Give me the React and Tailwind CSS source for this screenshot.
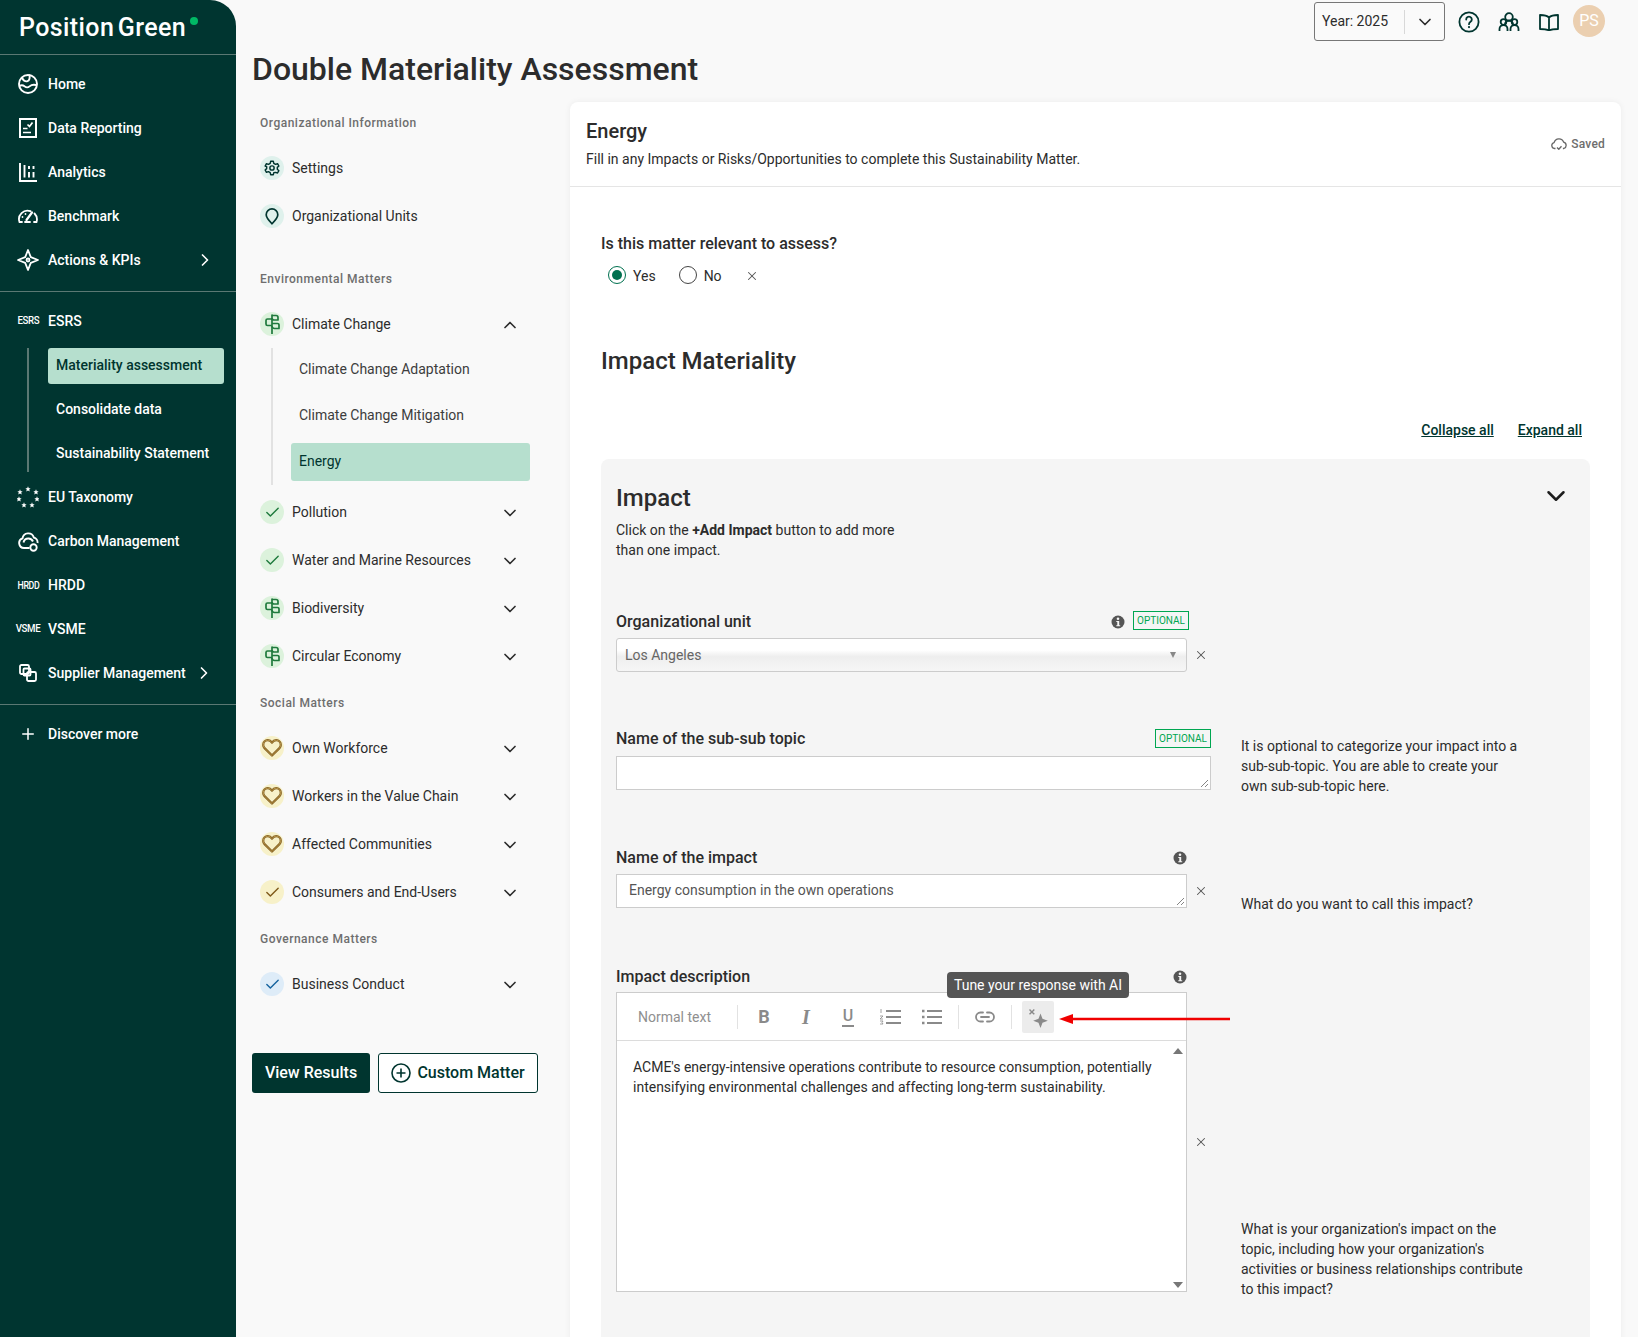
import { ChevronDown, ChevronRight, ChevronUp, Check, X, Plus } from "lucide-react";

function HomeIcon() {
  return (
    <svg width="20" height="20" viewBox="0 0 20 20" fill="none" stroke="currentColor" strokeWidth="1.9" strokeLinecap="round">
      <circle cx="10" cy="10" r="9" />
      <path d="M1.5 12c2-1.4 3.4-1 5 .3 1.700 1.300 3.500 1.400 5 .1 1.500-1.300 3-2.200 6.500-1.400" />
      <path d="M4 4c1.500 2.500 3.500 3.800 5.500 3.200 1.700-.5 2.400-2.400 2.100-6" />
    </svg>
  );
}

function ReportIcon() {
  return (
    <svg width="18" height="20" viewBox="0 0 18 20" fill="none" stroke="currentColor" strokeWidth="2">
      <rect x="1" y="1" width="16" height="18" />
      <path d="M8.500 6.500l2 2 3-4M4 10.500h4.500M4 14.500h8" strokeWidth="1.700" />
    </svg>
  );
}

function AnalyticsIcon() {
  return (
    <svg width="18" height="19" viewBox="0 0 18 19" fill="none" stroke="currentColor" strokeWidth="1.900">
      <path d="M1 0v18h17M5.500 2v12.500M10 9v5.500M14.500 9v5.500" />
      <path d="M10 3v3M14.500 3v3" />
    </svg>
  );
}

function GaugeIcon() {
  return (
    <svg width="20" height="14" viewBox="0 0 20 14" fill="none" stroke="currentColor" strokeWidth="1.800" strokeLinecap="round">
      <path d="M4 13H1.500A8.500 8.500 0 0 1 12.500 2.200" />
      <path d="M16.500 4.500A8.500 8.500 0 0 1 18.500 13H16" />
      <path d="M8.500 11L14 3.500" strokeWidth="2.200" />
      <path d="M7 13h5" strokeWidth="1.800" />
      <path d="M4.500 8v.1M7.500 5v.1" />
    </svg>
  );
}

function CompassIcon() {
  return (
    <svg width="22" height="22" viewBox="0 0 22 22" fill="none" stroke="currentColor" strokeWidth="1.800" strokeLinejoin="round">
      <path d="M11 1l2.800 7.200L21 11l-7.200 2.800L11 21l-2.800-7.200L1 11l7.200-2.800z" />
      <circle cx="11" cy="11" r="1.500" />
    </svg>
  );
}

function StarsIcon() {
  const points = [
    [11, 3], [3, 6], [19, 6], [2, 13], [20, 13], [7, 19], [15, 19],
  ];
  return (
    <svg width="22" height="22" viewBox="0 0 22 22" fill="currentColor">
      {points.map(([x, y], i) => (
        <path key={i} transform={`translate(${x} ${y}) scale(1.100)`} d="M0-2.400l.7 1.700 1.700.1-1.300 1.100.5 1.800L0 1.300l-1.600 1 .5-1.800-1.300-1.100 1.700-.1z" />
      ))}
    </svg>
  );
}

function CarbonIcon() {
  return (
    <svg width="21" height="21" viewBox="0 0 21 21" fill="none" stroke="currentColor" strokeWidth="1.900">
      <path d="M11.500 17H6a5 5 0 0 1-1.500-9.700A5.800 5.800 0 0 1 15.800 6.500a5 5 0 0 1 3.700 5.500" />
      <circle cx="15.500" cy="16.500" r="3.200" />
      <path d="M5.500 11.500a5 5 0 0 1 5-4 5 5 0 0 1 4.500 3" />
    </svg>
  );
}

function CopiesIcon() {
  return (
    <svg width="18" height="18" viewBox="0 0 18 18" fill="none" stroke="currentColor" strokeWidth="1.800">
      <rect x="1" y="1" width="9" height="9" rx="1.500" />
      <rect x="4.500" y="4.500" width="7" height="7" rx="1" />
      <rect x="8" y="8" width="9" height="9" rx="1.500" />
    </svg>
  );
}

function GearIcon() {
  return (
    <svg width="16" height="16" viewBox="0 0 24 24" fill="none" stroke="currentColor" strokeWidth="2.200" strokeLinejoin="round">
      <path d="M10 2h4l.7 3 2.600 1.500 3-.9 2 3.400-2.300 2.100v2.900l2.300 2.100-2 3.400-3-.9L14.700 19l-.7 3h-4l-.7-3-2.600-1.500-3 .9-2-3.400 2.300-2.100v-2.900L1.700 9l2-3.400 3 .9L9.300 5z" />
      <circle cx="12" cy="12" r="3.200" />
    </svg>
  );
}

function PinIcon() {
  return (
    <svg width="14" height="17" viewBox="0 0 14 17" fill="none" stroke="currentColor" strokeWidth="1.700" strokeLinejoin="round">
      <path d="M7 15.800C4 12.500 1.200 9.700 1.200 6.700a5.800 5.800 0 0 1 11.600 0c0 3-2.800 5.800-5.800 9.100z" />
    </svg>
  );
}

function PlantIcon() {
  return (
    <svg width="15" height="20" viewBox="0 0 15 20" fill="none" stroke="currentColor" strokeWidth="1.700" strokeLinejoin="round">
      <path d="M7 .5V20" />
      <path d="M7 1.500h4a2 2 0 0 1 2 2V6H9a2 2 0 0 1-2-2" />
      <path d="M7 5H2.500A1.500 1.500 0 0 0 1 6.500V10a1.500 1.500 0 0 0 1.500 1.500H7" />
      <path d="M7 9.500h5.500A1.500 1.500 0 0 1 14 11v3.500h-4.500A2.500 2.500 0 0 1 7 12" />
    </svg>
  );
}

function HeartIcon() {
  const d = "M9 14.800L2.300 8.100A4.200 4.200 0 0 1 1.100 5.200C1.100 2.800 3 1 5.200 1 6.700 1 8.100 1.800 9 3.100 9.900 1.800 11.300 1 12.800 1c2.200 0 4.100 1.800 4.100 4.200 0 1.100-.4 2.100-1.200 2.900z";
  return (
    <svg width="20" height="18" viewBox="0 0 18 16" fill="none" strokeLinejoin="round">
      <path d={d} stroke="currentColor" strokeWidth="2" />
      <path d={d} stroke="#d5b565" strokeWidth="0.600" />
    </svg>
  );
}

function InfoDot() {
  return (
    <svg width="14" height="14" viewBox="0 0 14 14">
      <circle cx="7" cy="7" r="6.500" fill="#555" />
      <circle cx="7" cy="3.800" r="1.300" fill="#f5f5f5" />
      <path d="M5.300 6h2.900v4.200h1v1H5.300v-1h1V7h-1z" fill="#f5f5f5" />
    </svg>
  );
}

function SideRow({ icon, label, chevron }) {
  return (
    <div className="flex h-11 items-center text-white">
      <div className="flex w-12 shrink-0 items-center justify-center pl-2">{icon}</div>
      <span className="text-sm font-medium">{label}</span>
      {chevron && <ChevronRight size={20} strokeWidth={2} className={chevron} />}
    </div>
  );
}

function TinyTag({ children, className = "" }) {
  return <span className={`scale-x-[0.88] font-medium tracking-[-0.4px] ${className}`}>{children}</span>;
}

function Sidebar() {
  return (
    <aside className="relative z-10 flex w-[236px] shrink-0 flex-col rounded-tr-[26px] bg-[#003530]">
      <div className="relative flex h-[55px] items-center border-b border-[#5b7873] pl-[19px]">
        <span className="text-[25px] font-medium leading-none tracking-[0.4px] text-white [word-spacing:-3px]">Position Green</span>
        <span className="absolute left-[190px] top-[17px] h-2 w-2 rounded-full bg-[#00b865]" />
      </div>
      <div className="border-b border-[#5b7873] pb-[9px] pt-[7px]">
        <SideRow icon={<HomeIcon />} label="Home" />
        <SideRow icon={<ReportIcon />} label="Data Reporting" />
        <SideRow icon={<AnalyticsIcon />} label="Analytics" />
        <SideRow icon={<GaugeIcon />} label="Benchmark" />
        <SideRow icon={<CompassIcon />} label="Actions & KPIs" chevron="ml-auto mr-[21px]" />
      </div>
      <div className="pt-[7px]">
        <SideRow icon={<TinyTag className="text-[11px]">ESRS</TinyTag>} label="ESRS" />
        <div className="ml-[27px] mt-[5px] flex h-[124px] flex-col border-l-2 border-[#5b7873] pl-[19px] text-sm font-medium text-white">
          <div className="flex h-9 w-[176px] shrink-0 items-center rounded-[3px] bg-[#b6dfce] pb-[2px] pl-2 text-[#00352f]">Materiality assessment</div>
          <div className="flex h-[44px] shrink-0 items-center pl-2 pt-[5px]">Consolidate data</div>
          <div className="flex h-[44px] shrink-0 items-center pl-2 pt-[5px]">Sustainability Statement</div>
        </div>
        <div className="mt-[3px]">
          <SideRow icon={<StarsIcon />} label="EU Taxonomy" />
          <SideRow icon={<CarbonIcon />} label="Carbon Management" />
          <SideRow icon={<TinyTag className="text-[10px]">HRDD</TinyTag>} label="HRDD" />
          <SideRow icon={<TinyTag className="text-[11px]">VSME</TinyTag>} label="VSME" />
          <SideRow icon={<CopiesIcon />} label="Supplier Management" chevron="ml-[8px]" />
        </div>
      </div>
      <div className="mt-[9px] border-t border-[#5b7873] pt-[7px]">
        <SideRow icon={<Plus size={18} strokeWidth={2} />} label="Discover more" />
      </div>
    </aside>
  );
}

function SectionLabel({ children, className = "" }) {
  return <div className={`text-xs font-medium tracking-[0.5px] text-[#6e6e6e] ${className}`}>{children}</div>;
}

function MatterRow({ icon, tone, label, open, noChevron, className = "" }) {
  return (
    <div className={`flex h-12 items-center ${className}`}>
      <div className={`flex h-6 w-6 shrink-0 items-center justify-center rounded-full ${tone}`}>{icon}</div>
      <span className="ml-2 text-sm text-[#2c2c2c]">{label}</span>
      {!noChevron &&
        (open ? (
          <ChevronUp size={20} className="ml-auto mr-[42px] mt-[2px] text-[#2c2c2c]" />
        ) : (
          <ChevronDown size={20} className="ml-auto mr-[42px] mt-[2px] text-[#2c2c2c]" />
        ))}
    </div>
  );
}

const greenTone = "bg-[#dcf2dc] text-[#1f7a3d]";
const tealTone = "bg-[#dff1ec] text-[#00352f]";
const yellowTone = "bg-[#f7f1c9] text-[#7f5a1a]";
const blueTone = "bg-[#deecf8] text-[#16639e]";

function MatterNav() {
  return (
    <div className="w-[318px] shrink-0">
      <div className="px-2 pt-[13px]">
        <SectionLabel>Organizational Information</SectionLabel>
        <MatterRow className="mt-[13px]" tone={tealTone} icon={<GearIcon />} label="Settings" noChevron />
        <MatterRow tone={tealTone} icon={<PinIcon />} label="Organizational Units" noChevron />
        <SectionLabel className="mt-[31px]">Environmental Matters</SectionLabel>
        <MatterRow className="mt-[13px]" tone={greenTone} icon={<PlantIcon />} label="Climate Change" open />
        <div className="ml-[11px] flex h-[137px] flex-col border-l-2 border-[#e2e2e2] pl-[18px] text-sm text-[#3d3d3d]">
          <div className="flex h-[42px] shrink-0 items-center pl-[8px]">Climate Change Adaptation</div>
          <div className="flex h-[50px] shrink-0 items-center pl-[8px]">Climate Change Mitigation</div>
          <div className="mt-[3px] flex h-[38px] w-[239px] shrink-0 items-center rounded-[3px] bg-[#b6dfce] pb-[2px] pl-[8px] text-[#00352f]">Energy</div>
        </div>
        <MatterRow className="mt-[3px]" tone={greenTone} icon={<Check size={17} strokeWidth={2} />} label="Pollution" />
        <MatterRow tone={greenTone} icon={<Check size={17} strokeWidth={2} />} label="Water and Marine Resources" />
        <MatterRow tone={greenTone} icon={<PlantIcon />} label="Biodiversity" />
        <MatterRow tone={greenTone} icon={<PlantIcon />} label="Circular Economy" />
        <SectionLabel className="mt-[15px]">Social Matters</SectionLabel>
        <MatterRow className="mt-[13px]" tone={yellowTone} icon={<HeartIcon />} label="Own Workforce" />
        <MatterRow tone={yellowTone} icon={<HeartIcon />} label="Workers in the Value Chain" />
        <MatterRow tone={yellowTone} icon={<HeartIcon />} label="Affected Communities" />
        <MatterRow tone={yellowTone} icon={<Check size={17} strokeWidth={2} />} label="Consumers and End-Users" />
        <SectionLabel className="mt-[15px]">Governance Matters</SectionLabel>
        <MatterRow className="mt-[13px]" tone={blueTone} icon={<Check size={17} strokeWidth={2} />} label="Business Conduct" />
      </div>
      <div className="mt-[45px] flex gap-2">
        <button className="h-10 w-[118px] rounded-[3px] bg-[#00352f] text-base font-medium text-white">View Results</button>
        <button className="flex h-10 w-[160px] items-center justify-center gap-[6px] rounded-[3px] border border-[#00352f] bg-white text-base font-medium text-[#00352f]">
          <svg width="20" height="20" viewBox="0 0 20 20" fill="none" stroke="currentColor" strokeWidth="1.600">
            <circle cx="10" cy="10" r="9" />
            <path d="M10 5.500v9M5.500 10h9" />
          </svg>
          Custom Matter
        </button>
      </div>
    </div>
  );
}

function Radio({ checked, label }) {
  return (
    <label className="flex items-center gap-[7px] text-sm text-[#2c2c2c]">
      <span className={`flex h-[18px] w-[18px] items-center justify-center rounded-full border ${checked ? "border-[#00704f]" : "border-[#444]"}`}>
        {checked && <span className="h-[10px] w-[10px] rounded-full bg-[#00704f]" />}
      </span>
      <span className="pt-[1px]">{label}</span>
    </label>
  );
}

function OptionalBadge({ className = "" }) {
  return <span className={`border border-[#00a651] px-[3px] py-[2px] text-[10px] leading-[13px] text-[#00a651] ${className}`}>OPTIONAL</span>;
}

function ResizeGrip() {
  return (
    <svg width="8" height="8" viewBox="0 0 8 8" className="absolute bottom-[2px] right-[2px]" stroke="#666" strokeWidth="0.800">
      <path d="M1 8l7-7M5 8l3-3" />
    </svg>
  );
}

function FieldClear() {
  return <X size={14} strokeWidth={1.800} className="ml-[7px] shrink-0 text-[#555]" />;
}

function ToolButton({ children }) {
  return <div className="flex h-8 w-[42px] shrink-0 items-center justify-center text-[#8a8a8a]">{children}</div>;
}

function EditorToolbar() {
  return (
    <div className="relative flex h-[48px] items-center border-b border-[#dcdcdc] pl-[21px] text-[#8a8a8a]">
      <span className="w-[99px] text-sm text-[#8f8f8f]">Normal text</span>
      <span className="h-6 w-px bg-[#e2e2e2]" />
      <div className="ml-[5px] flex">
        <ToolButton><span className="text-lg font-bold">B</span></ToolButton>
        <ToolButton><span className="font-['Liberation_Serif',serif] text-xl font-bold italic">I</span></ToolButton>
        <ToolButton><span className="border-b-2 border-[#8a8a8a] px-[1px] text-base font-medium leading-[18px]">U</span></ToolButton>
        <ToolButton>
          <svg width="22" height="18" viewBox="0 0 22 18" stroke="#8a8a8a" strokeWidth="1.800">
            <path d="M7 3h15M7 9h15M7 15h15" />
            <path d="M2 1v4M1 8h3l-3 3h3M1 13h3l-1 1.500 1 1.500H1" strokeWidth="0.800" fill="none" />
          </svg>
        </ToolButton>
        <ToolButton>
          <svg width="20" height="18" viewBox="0 0 20 18" stroke="#8a8a8a" strokeWidth="1.800">
            <path d="M5 3h15M5 9h15M5 15h15" />
            <path d="M0 3h2.500M0 9h2.500M0 15h2.500" strokeWidth="2.400" />
          </svg>
        </ToolButton>
      </div>
      <span className="ml-[5px] h-6 w-px bg-[#e2e2e2]" />
      <div className="flex w-[52px] items-center justify-center">
        <svg width="20" height="12" viewBox="0 0 20 12" fill="none" stroke="#8a8a8a" strokeWidth="1.800" strokeLinecap="round">
          <path d="M8 1.500H5.500a4.500 4.500 0 0 0 0 9H8M12 1.500h2.500a4.500 4.500 0 0 1 0 9H12M6 6h8" />
        </svg>
      </div>
      <span className="h-6 w-px bg-[#e2e2e2]" />
      <div className="ml-[10px] flex h-8 w-8 items-center justify-center rounded-[2px] bg-[#ececec]">
        <svg width="22" height="22" viewBox="0 0 22 22" fill="#8a8a8a">
          <path d="M3 3l1.900 1.900L6.800 3l1 1-1.900 1.900 1.900 1.900-1 1-1.900-1.900L3 8.800l-1-1 1.900-1.900L2 4z" />
          <path d="M13.500 7.500l2 5.300 5.300 2-5.300 1.900-2 5.300-2-5.300-5.300-1.900 5.300-2z" />
        </svg>
      </div>
      {/* tooltip and pointer arrow sit on top of the toolbar */}
      <div className="absolute left-[330px] top-[-21px] flex h-[26px] w-[182px] items-center justify-center rounded-[4px] bg-[#555] text-sm text-white">Tune your response with AI</div>
      <svg width="171" height="12" viewBox="0 0 171 12" className="absolute left-[442px] top-[20px]">
        <path d="M12 6h159" stroke="#f00000" strokeWidth="2.500" />
        <path d="M0 6l14-5v10z" fill="#f00000" />
      </svg>
    </div>
  );
}

function ImpactPanel() {
  return (
    <div className="mt-[19px] rounded-lg bg-[#f5f5f5] px-[15px] pb-[100px] pt-[23px]">
      <div className="flex items-start justify-between pr-[8px]">
        <h2 className="text-2xl font-medium leading-[32px] text-[#2c2c2c]">Impact</h2>
        <ChevronDown size={30} strokeWidth={2} className="mr-[-4px] mt-[-1px] text-[#1d1d1d]" />
      </div>
      <p className="mt-[6px] w-[300px] text-sm leading-5 text-[#2c2c2c]">
        Click on the <b className="font-bold">+Add Impact</b> button to add more than one impact.
      </p>

      <div className="mt-[47px] w-[600px]">
        <div className="mb-[2px] flex h-[29px] items-center pr-[27px]">
          <span className="text-base font-medium text-[#2c2c2c]">Organizational unit</span>
          <span className="ml-auto mr-[8px]"><InfoDot /></span>
          <OptionalBadge className="mb-[2px]" />
        </div>
        <div className="flex items-center">
          <div className="flex h-[34px] w-[571px] items-center justify-between rounded-[3px] border border-[#ccc] bg-[linear-gradient(#fff,#fff_35%,#eee_55%,#f6f6f6)] pl-2 pr-[10px] text-sm text-[#666]">
            Los Angeles
            <span className="h-0 w-0 border-x-[3px] border-t-[6px] border-x-transparent border-t-[#888]" />
          </div>
          <FieldClear />
        </div>
      </div>

      <div className="mt-[53px] flex h-[65px] w-[930px]">
        <div className="w-[595px]">
          <div className="mb-[4px] flex h-[27px] items-center justify-between">
            <span className="pt-[1px] text-base font-medium text-[#2c2c2c]">Name of the sub-sub topic</span>
            <OptionalBadge />
          </div>
          <div className="relative h-[34px] border border-[#ccc] bg-white">
            <ResizeGrip />
          </div>
        </div>
        <p className="ml-[30px] mt-[11px] w-[285px] text-sm leading-5 text-[#2c2c2c]">
          It is optional to categorize your impact into a sub-sub-topic. You are able to create your own sub-sub-topic here.
        </p>
      </div>

      <div className="mt-[54px] flex h-[64px] w-[930px]">
        <div className="w-[595px]">
          <div className="mb-[3px] flex h-[27px] w-[571px] items-center justify-between">
            <span className="text-base font-medium text-[#2c2c2c]">Name of the impact</span>
            <InfoDot />
          </div>
          <div className="flex items-center">
            <div className="relative flex h-[34px] w-[571px] items-center border border-[#ccc] bg-white pb-[2px] pl-[12px] text-sm text-[#555]">
              Energy consumption in the own operations
              <ResizeGrip />
            </div>
            <FieldClear />
          </div>
        </div>
        <p className="ml-[30px] mt-[50px] w-[285px] text-sm leading-5 text-[#2c2c2c]">What do you want to call this impact?</p>
      </div>

      <div className="mt-[55px] flex w-[930px]">
        <div className="w-[595px]">
          <div className="mb-[2px] flex h-[27px] w-[571px] items-center justify-between">
            <span className="text-base font-medium text-[#2c2c2c]">Impact description</span>
            <InfoDot />
          </div>
          <div className="flex items-center">
            <div className="h-[300px] w-[571px] border border-[#ccc] bg-white">
              <EditorToolbar />
              <div className="relative flex h-[250px]">
                <p className="mt-[16px] w-[545px] pl-[16px] text-sm leading-5 text-[#2c2c2c]">
                  ACME's energy-intensive operations contribute to resource consumption, potentially intensifying environmental challenges and affecting long-term sustainability.
                </p>
                <span className="absolute right-[3px] top-[7px] h-0 w-0 border-x-[5px] border-b-[6px] border-x-transparent border-b-[#777]" />
                <span className="absolute bottom-[3px] right-[3px] h-0 w-0 border-x-[5px] border-t-[6px] border-x-transparent border-t-[#777]" />
              </div>
            </div>
            <FieldClear />
          </div>
        </div>
        <p className="ml-[30px] mt-[256px] w-[285px] text-sm leading-5 text-[#2c2c2c]">
          What is your organization's impact on the topic, including how your organization's activities or business relationships contribute to this impact?
        </p>
      </div>
    </div>
  );
}

function ContentCard() {
  return (
    <div className="w-[1051px] rounded-t-lg bg-white pb-[100px] shadow-[0_0_6px_rgba(0,0,0,0.06)]">
      <div className="flex h-[85px] items-start justify-between border-b border-[#e5e5e5] px-[16px] pt-[16px]">
        <div>
          <h2 className="text-xl font-medium leading-[26px] text-[#2c2c2c]">Energy</h2>
          <p className="mt-[5px] text-sm leading-5 text-[#2c2c2c]">Fill in any Impacts or Risks/Opportunities to complete this Sustainability Matter.</p>
        </div>
        <div className="mt-[18px] flex items-center gap-[4px] text-xs font-medium tracking-[0.2px] text-[#6e6e6e]">
          <svg width="16" height="14" viewBox="0 0 16 14" fill="none" stroke="#666" strokeWidth="1.300" strokeLinejoin="round">
            <path d="M4.500 11.500H3.500a3 3 0 0 1-.4-5.900 5 5 0 0 1 9.600-.4 3.300 3.300 0 0 1 .2 6.300h-1" />
            <path d="M6 10.500l1.800 1.800 2.700-3" />
          </svg>
          Saved
        </div>
      </div>
      <div className="px-[31px] pt-[45px]">
        <div className="text-base font-medium leading-6 text-[#2c2c2c]">Is this matter relevant to assess?</div>
        <div className="ml-[7px] mt-[9px] flex h-5 items-center gap-[23px]">
          <Radio checked label="Yes" />
          <Radio label="No" />
          <X size={14} strokeWidth={1.800} className="mt-[1px] text-[#555]" />
        </div>
        <h2 className="mt-[60px] text-2xl font-medium leading-8 text-[#2c2c2c]">Impact Materiality</h2>
        <div className="mt-[43px] flex justify-end gap-[24px] pr-[8px] text-sm font-medium leading-5 text-[#00352f] underline">
          <span>Collapse all</span>
          <span>Expand all</span>
        </div>
        <ImpactPanel />
      </div>
    </div>
  );
}

function TopBar() {
  return (
    <div className="flex h-[50px] items-start justify-end pr-[33px] pt-[2px]">
      <div className="flex h-[39px] w-[131px] items-center rounded-[3px] border border-[#777] bg-[#fafafa] pl-[7px] text-sm text-[#2c2c2c]">
        <span className="w-[82px] pb-[2px]">Year: 2025</span>
        <span className="h-6 w-px bg-[#d8d8d8]" />
        <ChevronDown size={20} className="ml-[10px]" />
      </div>
      <div className="ml-[13px] mt-[9px] flex items-center text-[#00352f]">
        <svg width="22" height="22" viewBox="0 0 22 22" fill="none" stroke="currentColor" strokeWidth="1.800" strokeLinecap="round">
          <circle cx="11" cy="11" r="9.600" />
          <path d="M8.200 8.500a2.800 2.800 0 1 1 4.300 2.300c-1 .7-1.500 1.200-1.500 2.400" />
          <path d="M11 16v.1" strokeWidth="2.200" />
        </svg>
        <svg width="22" height="20" viewBox="0 0 22 20" fill="none" stroke="currentColor" strokeWidth="1.800" className="ml-[18px]">
          <circle cx="11" cy="5" r="3.800" />
          <circle cx="5.500" cy="10" r="2.800" />
          <circle cx="16.500" cy="10" r="2.800" />
          <path d="M1.500 19v-2a4 4 0 0 1 8 0v2M12.500 19v-2a4 4 0 0 1 8 0v2M7 12.500a4 4 0 0 1 8 0" />
        </svg>
        <svg width="20" height="17" viewBox="0 0 20 17" fill="none" stroke="currentColor" strokeWidth="1.800" strokeLinejoin="round" className="ml-[19px]">
          <path d="M10 3.500C8 1.500 5 1 1 1v14c4 0 7 .3 9 1.500 2-1.200 5-1.500 9-1.500V1c-4 0-7 .5-9 2.500zM10 3.500v13" />
        </svg>
      </div>
      <div className="ml-[14px] mt-[3px] flex h-8 w-8 items-center justify-center rounded-full bg-[#ebcfb0] text-base text-white">PS</div>
    </div>
  );
}

export default function App() {
  return (
    <div className="flex h-[1337px] overflow-hidden bg-white font-['Roboto',sans-serif]">
      <Sidebar />
      <div className="-ml-[26px] flex-1 overflow-hidden bg-[#f9f9f9] pl-[26px]">
        <TopBar />
        <div className="pl-[16px]">
          <h1 className="text-[32px] font-medium leading-[38px] text-[#2c2c2c]">Double Materiality Assessment</h1>
          <div className="mt-[14px] flex">
            <MatterNav />
            <ContentCard />
          </div>
        </div>
      </div>
    </div>
  );
}
